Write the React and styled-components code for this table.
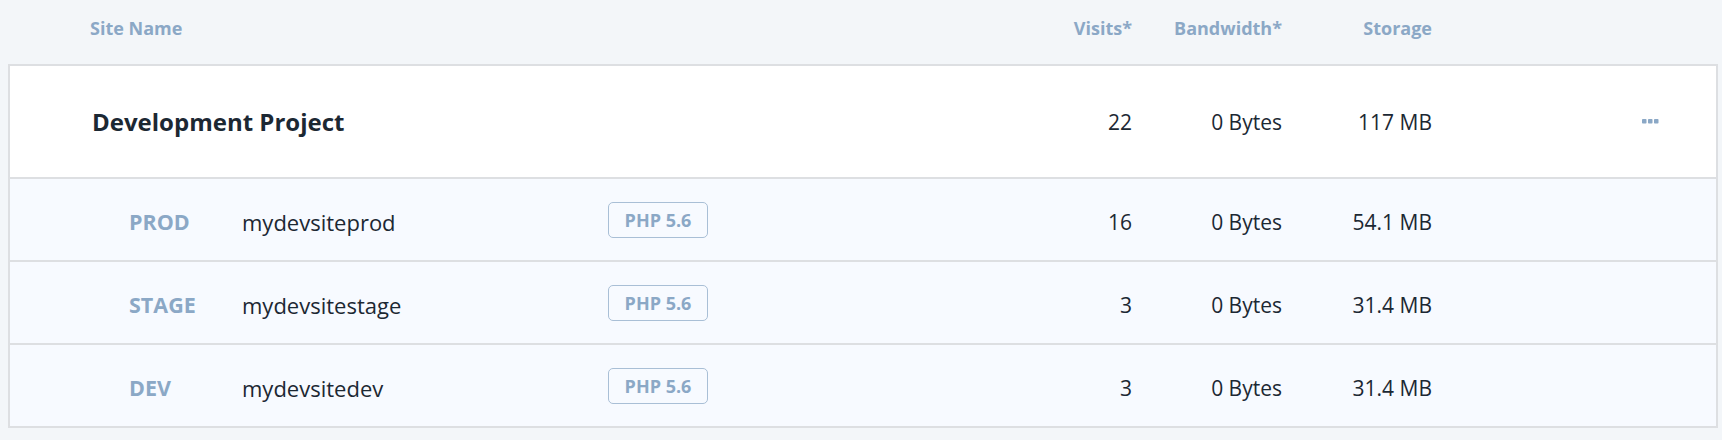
import React from 'react';
import styled, { createGlobalStyle } from 'styled-components';

const GlobalStyle = createGlobalStyle`
  html, body {
    margin: 0;
    padding: 0;
    background: #f3f6f9;
    font-family: "Open Sans", "Liberation Sans", sans-serif;
  }
`;

const Page = styled.div`
  padding: 0 4px 0 8px;
`;

const COLS = '1fr 100px 150px 150px 284px';

const Header = styled.div`
  display: grid;
  grid-template-columns: ${COLS};
  align-items: center;
  height: 56px;
  margin-bottom: 8px;
  border: 0 solid transparent;
  border-width: 0 2px;
  color: #8ba8c6;
  font-size: 18px;
  font-weight: 700;
`;

const HeadCell = styled.div`
  text-align: ${(p) => (p.$right ? 'right' : 'left')};
  padding-left: ${(p) => p.$pad || 0}px;
`;

const Card = styled.div`
  border: 2px solid #dddfe2;
  border-bottom: none;
`;

const Row = styled.div`
  display: grid;
  grid-template-columns: ${COLS};
  align-items: center;
  height: ${(p) => (p.$main ? 111 : 81)}px;
  background: ${(p) => (p.$main ? '#ffffff' : '#f7faff')};
  border-bottom: 2px solid #dddfe2;
  color: #1c2833;
  font-size: 21px;
`;

const ProjectName = styled.div`
  padding-left: 82px;
  font-size: 24px;
  font-weight: 700;
`;

const SiteCell = styled.div`
  display: flex;
  align-items: center;
  padding-left: 119px;
  padding-top: 4px;
`;

const Env = styled.div`
  width: 113px;
  color: #8ba8c6;
  font-size: 21.5px;
  font-weight: 700;
`;

const SiteName = styled.div`
  width: 366px;
  font-size: 22px;
`;

const Badge = styled.span`
  display: inline-flex;
  align-items: center;
  justify-content: center;
  box-sizing: border-box;
  width: 100px;
  height: 36px;
  border: 1.5px solid #a9bfd6;
  border-radius: 5px;
  color: #8ba8c6;
  font-size: 18px;
  font-weight: 700;
  margin-top: -4px;
`;

const Num = styled.div`
  text-align: right;
  padding-top: ${(p) => (p.$main ? 0 : 4)}px;
`;

const Actions = styled.div`
  display: flex;
  justify-content: flex-end;
  padding-right: 57px;
`;

const Dots = () => (
  <svg width="17" height="5" viewBox="0 0 17 5">
    <rect x="0" y="0" width="4.5" height="4.5" rx="0.8" fill="#8ba8c6" />
    <rect x="6" y="0" width="4.5" height="4.5" rx="0.8" fill="#8ba8c6" />
    <rect x="12" y="0" width="4.5" height="4.5" rx="0.8" fill="#8ba8c6" />
  </svg>
);

const sites = [
  { env: 'PROD', name: 'mydevsiteprod', visits: '16', bandwidth: '0 Bytes', storage: '54.1 MB' },
  { env: 'STAGE', name: 'mydevsitestage', visits: '3', bandwidth: '0 Bytes', storage: '31.4 MB' },
  { env: 'DEV', name: 'mydevsitedev', visits: '3', bandwidth: '0 Bytes', storage: '31.4 MB' },
];

export default function App() {
  return (
    <Page>
      <GlobalStyle />
      <Header>
        <HeadCell $pad={80}>Site Name</HeadCell>
        <HeadCell $right>Visits*</HeadCell>
        <HeadCell $right>Bandwidth*</HeadCell>
        <HeadCell $right>Storage</HeadCell>
        <div />
      </Header>
      <Card>
        <Row $main>
          <ProjectName>Development Project</ProjectName>
          <Num $main>22</Num>
          <Num $main>0 Bytes</Num>
          <Num $main>117 MB</Num>
          <Actions>
            <Dots />
          </Actions>
        </Row>
        {sites.map((s) => (
          <Row key={s.env}>
            <SiteCell>
              <Env>{s.env}</Env>
              <SiteName>{s.name}</SiteName>
              <Badge>PHP 5.6</Badge>
            </SiteCell>
            <Num>{s.visits}</Num>
            <Num>{s.bandwidth}</Num>
            <Num>{s.storage}</Num>
            <div />
          </Row>
        ))}
      </Card>
    </Page>
  );
}
